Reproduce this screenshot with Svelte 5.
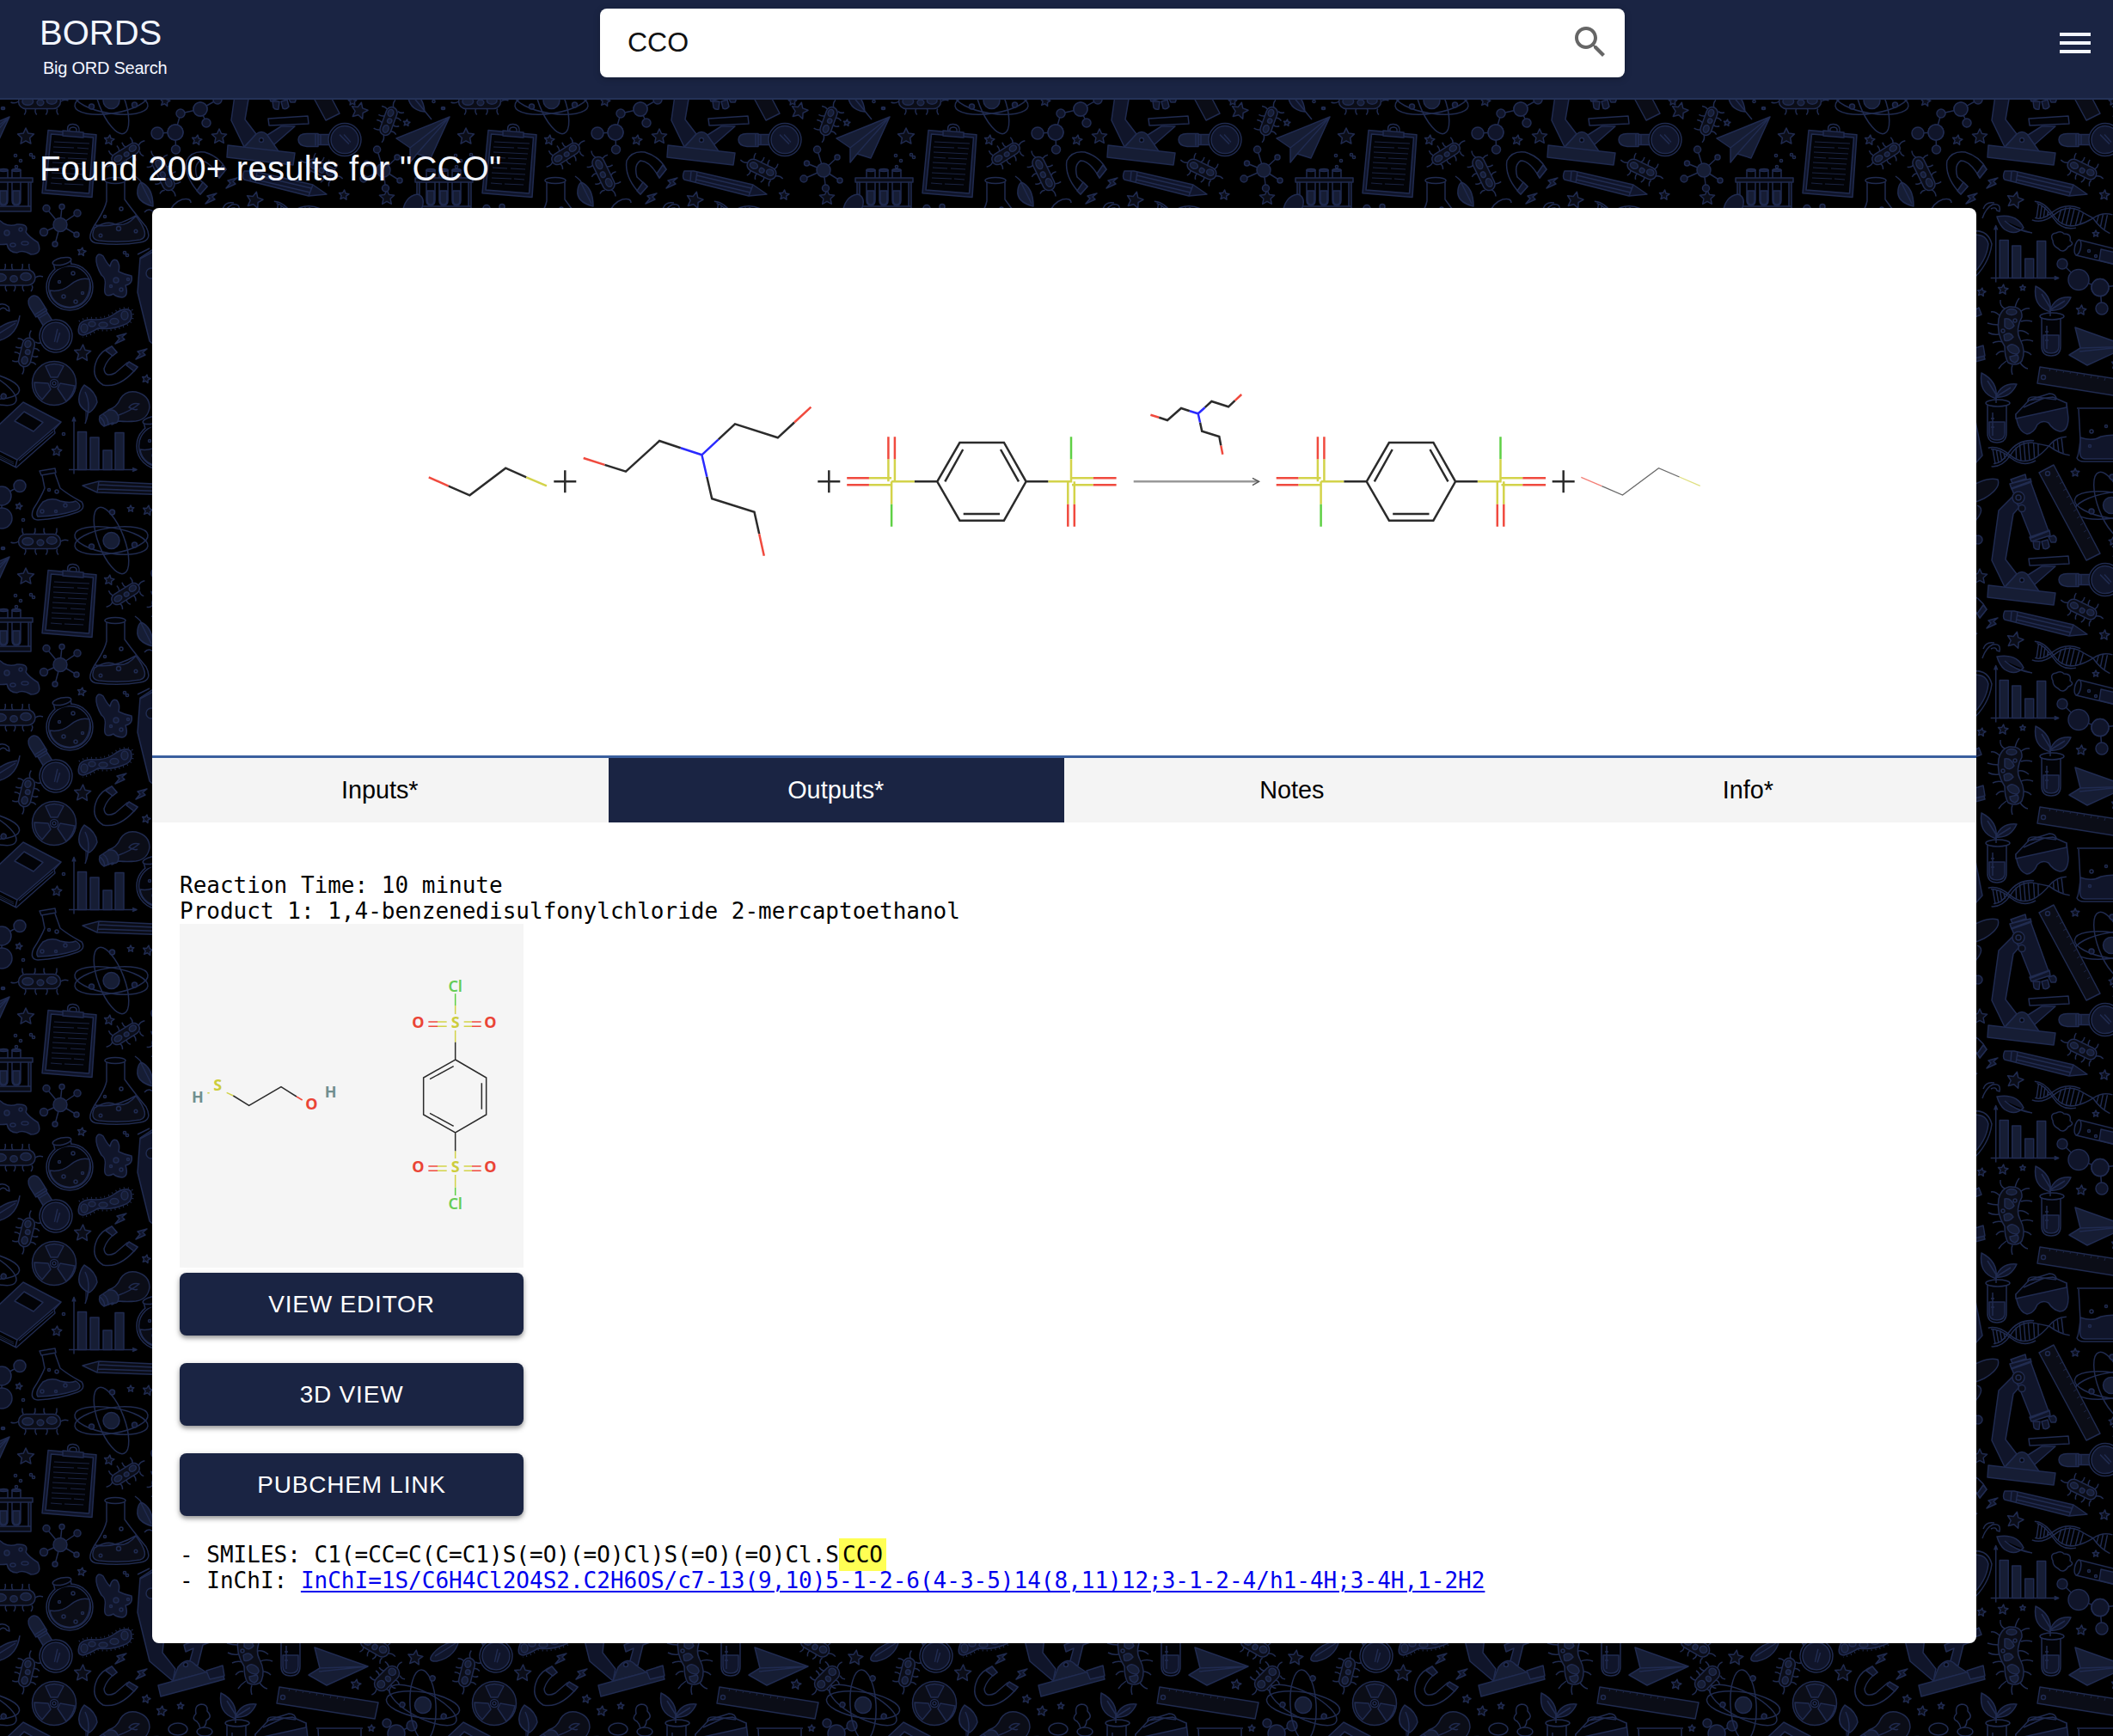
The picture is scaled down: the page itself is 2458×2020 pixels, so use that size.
<script>
  const T = 512;
  const starPts = (cx, cy, r, turn = 0) => {
    let s = '';
    for (let i = 0; i < 10; i++) {
      const a = ((i * 36 - 90 + turn) * Math.PI) / 180;
      const q = i % 2 ? r * 0.48 : r;
      s += `${(cx + Math.cos(a) * q).toFixed(1)},${(cy + Math.sin(a) * q).toFixed(1)} `;
    }
    return s;
  };

  // [x, y, radius, rotation]
  const stars = [
    [30, 159, 10, 0], [127, 163, 6, 8], [95, 293, 5, 10], [96, 411, 10, 3], [170, 441, 5, 12], [66, 13, 6, 5],
    [22, 77, 4, 12], [152, 80, 4, 0], [172, 82, 6, 10], [255, 159, 9, 0], [296, 233, 10, 14], [400, 227, 6, 6],
    [257, 340, 5, 10], [282, 337, 6, 6], [305, 335, 3.5, 0], [373, 361, 6, 5], [390, 272, 4, 0], [366, 38, 5, 0],
    [192, 118, 6, 10], [229, 163, 6, 10], [418, 129, 10, 14], [473, 143, 4, 8], [450, 230, 9, 0], [414, 424, 6, 10],
    [483, 393, 9, 8], [432, 475, 4, 5], [188, 455, 6, 8], [210, 449, 4, 4], [410, 118, 5, 0]
  ];

  // [x, y, length, thickness, rotation]
  const germs = [
    [46, 118, 49, 17, 0], [146, 179, 36, 13, -32], [190, 202, 42, 14, 64], [15, 323, 52, 18, 0], [31, 410, 34, 14, -76],
    [374, 197, 36, 14, 26], [452, 141, 34, 13, -70], [450, 417, 34, 17, -45], [436, 379, 36, 16, 30]
  ];
  const hairs = (l, w) => {
    let d = '';
    const n = Math.max(4, Math.round(l / 11));
    for (let i = 0; i < n; i++) {
      const x = -l / 2 + w / 3 + ((l - w / 1.5) * i) / (n - 1);
      const k = i % 2 ? 2 : -2;
      d += `M${x} ${-w / 2}q${k} -3 ${k / 2} -7M${x + 2} ${w / 2}q${-k} 3 ${k / 2} 7`;
    }
    return d + `M${-l / 2} 0q-4 3 -9 1M${l / 2} 0q4 -3 9 -1`;
  };

  // hub first, then the satellites around it
  const hubs = [
    [[70, 261.5, 8], [54, 242.5, 4], [72, 240.5, 3], [90, 248, 4], [51, 270, 4.5], [89, 273, 3], [64, 284, 3]],
    [[446, 198, 8], [438.6, 174, 4], [462, 183, 3], [426.5, 190, 3], [423, 208, 4], [465, 210, 3], [448.5, 219, 4]]
  ];
  const chains = [
    [[183, 155, 7], [204, 154, 9], [204.5, 174, 5]],
    [[204, 154, 9], [210, 132, 5], [233, 127, 8], [240, 143, 5]],
    [[233, 127, 8], [253, 116, 5]],
    [[351, 307, 6], [370, 325.5, 12], [395, 334.6, 10], [397, 359, 7]],
    [[395, 334.6, 10], [424, 331, 7]],
    [[23, 53.5, 7], [2, 65, 11], [2, 91, 12]],
    [[450, 469, 5], [461, 481, 10], [479, 472, 6]]
  ];

  const atoms = [[129.5, 117, 0], [492, 448, 18], [408, 76, 0]];
  const charts = [[86, 34.5 + 512], [273.7, 323.5]];
  const bars = [[4.5, 44], [19, 37.5], [34, 22.5], [48, 43]];
  const sprouts = [[0, 0], [-63, 101]];
  const lenses = [[65, 391, 58], [401, 162.6, 0]];
  const bolts = [[140, 394], [164, 412], [269, 213], [245, 231]];
  const dots = [[18, 181], [24, 187], [36, 180], [39, 183], [19, 194], [145, 294], [148, 297], [74, 505], [27, 93], [3, 126], [504.5, 118], [516, 126], [475, 374]];

  const cols = [-1, 0, 1, 2, 3, 4];
  const rows = [-1, 0, 1, 2, 3];

  const tabs = ['Inputs*', 'Outputs*', 'Notes', 'Info*'];
  let active = $state(1);
  let query = $state('CCO');
  const actions = ['VIEW EDITOR', '3D VIEW', 'PUBCHEM LINK'];
</script>

{#snippet dichloride()}
  <path class="y" d="M1010.9 556.3H1037M1010.9 564.3H1037M1033.4 534.3V560.3M1040.9 534.3V560.3M1037.1 560.3V586.7M1037.1 560.3H1063.9" />
  <path class="r" d="M985.2 556.3H1010.9M985.2 564.3H1010.9M1033.4 508.3V534.3M1040.9 508.3V534.3" />
  <path class="g" d="M1037.1 586.7V612.7M1246 508.3V534.3" />
  <path class="y" d="M1247 556.3H1271.8M1247 564.3H1271.8M1242.3 560.3V586.7M1249.8 560.3V586.7M1246 534.3V560.3H1219.3" />
  <path class="r" d="M1271.8 556.3H1298.6M1271.8 564.3H1298.6M1242.3 586.7V612.7M1249.8 586.7V612.7" />
  <path class="k" d="M1063.9 560.3H1090.2M1193.6 560.3H1219.3M1090.2 560.3L1116.4 515H1167.9L1193.6 560.3L1167.9 605.7H1116.4ZM1120.2 523L1099.3 560.3M1164 523L1185 560.3M1120.7 598H1163" />
{/snippet}

{#snippet plus(x)}
  <path class="k" d="M{x - 13} 560.3h26M{x} 547.3v26" />
{/snippet}

<div class="page">
  <svg class="backdrop" width="2458" height="2020" viewBox="0 0 2458 2020" aria-hidden="true">
    <defs>
      <g id="doodles">
        {#each stars as [x, y, r, t]}<polygon class="f1" points={starPts(x, y, r, t)} />{/each}
        {#each dots as [x, y]}<circle cx={x} cy={y} r="1.6" />{/each}
        {#each germs as [x, y, l, w, t]}
          <g transform="translate({x} {y}) rotate({t})">
            <path d={hairs(l, w)} />
            <rect class="f1" x={-l / 2} y={-w / 2} width={l} height={w} rx={w / 2} />
            <ellipse class="f3" cx={-l * 0.28} cy="0" rx={l * 0.13} ry={w * 0.25} />
            <ellipse class="f3" cx={l * 0.02} cy={w * 0.08} rx={l * 0.08} ry={w * 0.2} />
            <ellipse class="f3" cx={l * 0.29} cy="-1" rx={l * 0.12} ry={w * 0.25} />
          </g>
        {/each}

        <!-- large upright bacterium -->
        <path d="M284 359Q278 356 279 349M296 358Q298 350 301 347M302 363Q308 358 313 359M303 374Q309 372 316 374M300 385Q306 384 312 389M303 397Q310 394 317 397M306 409Q311 409 315 413M302 422Q306 428 311 429M293 425Q291 430 293 436M286 420Q280 424 277 429M283 409Q278 408 274 413M282 398Q276 396 270 399M277 389Q270 390 265 387M277 378Q270 378 264 376M279 368Q273 362 268 363" />
        <path class="f1" d="M289 357Q305 356 304 369Q296 384 302 395Q309 408 304 420Q298 427 288 422Q284 415 284 403Q274 388 277 371Q280 359 289 357Z" />
        <ellipse class="f3" cx="292" cy="363" rx="6" ry="3.500" /><path class="f3" d="M284 371Q291 369 295 379Q290 386 284 380ZM283 390Q290 385 294 392Q289 398 284 396ZM287 404Q292 397 300 405Q303 411 297 412Q288 411 287 404ZM290 415L299 413Q302 419 296 422Q290 421 290 415Z" />
        <circle cx="296" cy="373" r="2" /><circle cx="282" cy="385" r="2" />

        {#each hubs as hub}
          {#each hub.slice(1) as [x, y, r]}
            <path d="M{hub[0][0]} {hub[0][1]}L{x} {y}" />
            <circle class="f2" cx={x} cy={y} r={r} />
          {/each}
          <circle class="f3" cx={hub[0][0]} cy={hub[0][1]} r={hub[0][2]} />
        {/each}
        {#each chains as chain}
          <polyline points={chain.map((p) => `${p[0]},${p[1]}`).join(' ')} />
          {#each chain as [x, y, r]}<circle class="f2" cx={x} cy={y} r={r} />{/each}
        {/each}
        {#each atoms as [x, y, t]}
          <g transform="translate({x} {y}) rotate({t})">
            <ellipse rx="43" ry="15" transform="rotate(9)" />
            <ellipse rx="43" ry="15" transform="rotate(-9)" />
            <ellipse rx="41" ry="15" transform="rotate(69)" />
            <circle class="f3" r="9.5" />
            <circle class="f2" cx="1" cy="-33" r="3" />
            <circle class="f2" cx="-23" cy="7" r="3" />
            <circle class="f2" cx="27" cy="5" r="3" />
          </g>
        {/each}
        {#each charts as [x, y]}
          <g transform="translate({x} {y})">
            <path d="M0 5V-60M-6 0H72M-2 -56L0 -61L2 -56M68 -2L73 0L68 2" />
            {#each bars as [bx, h]}<rect class="f3" x={bx} y={-h} width="10" height={h} />{/each}
          </g>
        {/each}
        {#each sprouts as [x, y]}
          <g transform="translate({x} {y})">
            <path class="f2" d="M337 363C322 358 318 348 320 333C332 339 339 348 337 363ZM337 361C341 349 350 345 361 346C356 357 348 362 337 361Z" />
            <path d="M337 368V358L327 342M338 360L354 350" />
            <path class="f0" d="M327 370V403Q327 414 338 414Q349 414 349 403V370" />
            <path class="f2" d="M329 390H347V403Q347 411 338 411Q329 411 329 403Z" />
            <ellipse cx="339" cy="368" rx="14" ry="4" />
            <path d="M333 379V406M331 386h4M331 396h4" />
          </g>
        {/each}
        {#each lenses as [x, y, t]}
          <g transform="translate({x} {y}) rotate({t})">
            <path class="f3" d="M-17 -6H-31V6H-17ZM-31 -7H-44Q-54 -7 -54 0Q-54 7 -44 8H-31Z" />
            <path d="M-28 -6v12M-34 -7v14" />
            <circle class="f0" r="19" />
            <circle class="f2" r="16" />
            <path d="M-6 -6L5 5M-1 -6L7 3" />
          </g>
        {/each}
        {#each bolts as [x, y]}<path class="f2" d="M{x + 7} {y - 6}L{x - 4} {y - 3}L{x - 1} {y}L{x - 6} {y + 6}L{x + 5} {y + 1}L{x + 2} {y - 2}Z" />{/each}

        <!-- clipboard -->
        <path class="f2" d="M56 151.5L112 156.7L107 229.4L49 224.7Z" />
        <path class="f0" d="M59.5 156L108.5 160L103.5 225L53 221Z" />
        <path d="M79 153Q77 144 85 144.500Q93 145 92 153M81 153Q80 148 85 148Q90 148 89 153" />
        <path class="f2" d="M73 152L97 154V160L73 158Z" />
        <path class="thin" d="M63 165l41 2M62 171l24 1m4 0l13 1M62 177l40 2M62 183l14 1m3 0l22 1M61 189l39 2M61 195l17 1m4 0l17 1M60 201l39 2M60 207l23 1m3 0l12 1M59 213l13 1m3 0l22 1" />

        <!-- conical flask -->
        <ellipse class="f0" cx="134" cy="210" rx="12" ry="3.500" />
        <path d="M124 212V234Q122 244 110 262Q98 282 114 283Q140 286 163 282Q178 280 170 264Q155 246 145 232V212" />
        <path class="f1" d="M110 265Q125 256 134 261Q148 264 158 251Q176 275 163 279Q140 283 115 280Q104 278 110 265Z" />
        <path d="M111 262Q132 266 158 251" /><circle cx="138" cy="266" r="2.500" /><circle cx="117" cy="274" r="1.800" /><circle cx="158" cy="269" r="1.800" /><circle cx="141" cy="243" r="2" /><circle cx="122" cy="252" r="1.500" />
        <path class="f3" d="M157 205Q164 210 164 212Q178 218 178 240Q158 235 160 221Q161 214 164 212M164 213L176 237" />

        <!-- tube rack -->
        {#each [501, 516, 531] as x}
          <path class="f0" d="M{x - 5} 198V233Q{x - 5} 239 {x} 239Q{x + 5} 239 {x + 5} 233V198Z" />
          <path class="f3" d="M{x - 4} 222H{x + 4}V233Q{x + 4} 238 {x} 238Q{x - 4} 238 {x - 4} 233Z" />
          <ellipse cx={x} cy="198" rx="5" ry="1.500" />
        {/each}
        <path class="f1" d="M483 207H550V212H483ZM485 240H548V246H485ZM485 212H488V240H485ZM545 212H548V240H545Z" />

        <!-- amoebas -->
        <path class="f2" d="M-14 262Q-6 250 4 260Q12 264 20 261Q34 260 30 270Q34 276 44 282Q50 296 36 296Q26 290 20 294Q10 294 8 284Q-4 286 -10 280Q-18 272 -14 262Z" />
        <circle class="f3" cx="8" cy="271" r="3" /><ellipse cx="15" cy="285" rx="3" ry="2" /><ellipse cx="29" cy="283" rx="4" ry="2" /><circle cx="24" cy="267" r="2" />
        <path class="f2" d="M112 300Q114 293 120 298Q124 306 128 310Q130 300 136 303Q140 308 138 316Q146 320 153 321Q155 330 146 332Q150 345 142 346Q134 345 132 342Q120 348 122 334Q124 324 118 320Q111 308 112 300Z" />
        <circle class="f3" cx="135" cy="326" r="3" /><circle cx="141" cy="337" r="2" /><circle cx="129" cy="333" r="1.500" /><circle cx="149" cy="325" r="1.500" />

        <!-- round flasks -->
        {#each [[81, 334], [186, 519]] as [x, y]}
          <g transform="translate({x} {y})">
            <circle r="27" /><circle class="f0" r="24.500" />
            <path class="f1" d="M-23 4Q-10 6 0 -2Q12 -12 23 -9Q26 8 14 19Q0 28 -14 19Q-22 13 -23 4Z" />
            <path class="f0" d="M-17 -20L-19 -28L1 -33L2 -26" /><ellipse class="f0" cx="-9" cy="-30" rx="11" ry="4" transform="rotate(-12 -9 -30)" />
            <circle cx="-7" cy="11" r="2" /><circle cx="7" cy="17" r="2" /><circle cx="15" cy="7" r="1.500" /><circle cx="4" cy="-16" r="2" /><circle cx="-12" cy="-6" r="1.500" />
          </g>
        {/each}

        <!-- long bacterium -->
        <path class="f2" d="M93 377Q98 371 110 372Q124 372 132 366Q146 356 152 362Q156 374 144 378Q130 384 114 382Q104 388 97 390Q88 390 93 377Z" />
        <ellipse class="f3" cx="98" cy="382" rx="4" ry="5" /><ellipse class="f3" cx="107" cy="377" rx="4" ry="3" /><ellipse class="f3" cx="120" cy="378" rx="5" ry="3" /><ellipse class="f3" cx="133" cy="374" rx="5" ry="3.500" /><ellipse class="f3" cx="145" cy="367" rx="4" ry="5" />
        <path class="hair" d="M92 374Q98 369 110 370Q124 370 131 364Q146 354 154 361Q158 375 144 380Q130 386 114 384Q104 391 96 392" />

        <!-- microscope, left -->
        <path class="f2" d="M163 300L178 290L194 340L189 387L204 406L201 420L174 397L160 340Z" />
        <path class="f2" d="M160 296L174 289M163 301L178 293" /><circle class="f1" cx="176" cy="318" r="6" />
        <path class="f2" d="M214 378L244 366L247 374L236 378L230 402L220 400L225 382L216 386Z" />
        <path class="f3" d="M201 420L207 404Q218 390 228 402L240 410Z" />
        <path class="f3" d="M184 425L257 405L261 418L187 438Z" /><circle class="f0" cx="216" cy="401" r="2.500" />

        <!-- magnets -->
        <path d="M130 403L136 410Q124 418 121 429Q122 440 134 434L148 422L160 427Q140 452 120 448Q104 438 113 418Q118 408 130 403ZM123 408L131 414M150 421L157 431" />
        <path class="f2" d="M130 403L136 410L131 414L123 408ZM150 421L160 427L156 432L147 425Z" />
        <path d="M263 197L255 207Q244 187 233 187Q225 192 229 206L241 217L233 226Q214 206 217 187Q223 175 238 177Q255 182 263 197Z" />
        <path class="f2" d="M263 197L255 207L252 202L259 192ZM241 217L233 226L229 222L236 212Z" />

        <!-- leaves -->
        <path class="f2" d="M23 367Q20 392 -4 397Q-16 398 -8 388Q2 376 20 373M18 376Q6 384 -6 391" />
        <path class="f2" d="M98 448Q112 456 113 468Q110 476 104 480Q90 474 92 462Q93 454 98 448ZM99 456Q107 472 99 493" />
        <path class="f2" d="M275 252Q298 248 306 265Q296 275 284 267Q278 262 275 252ZM284 257Q296 268 316 271" />
        <path class="f2" d="M474 106Q492 108 494 130Q474 128 474 106ZM480 112L502 139" />
        <path d="M-6 358Q2 350 10 357L11 362L8 361Q4 355 -2 362M258 254Q262 242 270 238Q280 236 278 246L275 245Q274 240 268 243M196 250Q200 236 212 232Q222 230 222 236" />

        <!-- radiation sign -->
        <circle class="f1" cx="63" cy="446" r="25.500" />
        <path class="f2" d="M59 439L53 426Q63 421 74 426L67 439ZM70 446L87 449Q85 460 77 467L67 452ZM56 446L40 445Q40 457 49 465L59 453Z" />
        <circle class="f0" cx="63" cy="446" r="4.500" /><circle cx="63" cy="446" r="2" />

        <!-- bulb -->
        <path class="f1" d="M126 477Q136 474 140 464Q146 454 158 456Q174 460 174 474Q172 488 158 490Q148 491 138 490L130 494Z" />
        <path d="M138 483Q152 478 162 470Q154 468 150 474Q158 478 160 476" />
        <path class="f3" d="M125 478Q134 474 138 485Q138 494 131 492L121 496Q114 492 116 484Z" /><path d="M120 482Q126 486 126 495M116 485Q121 488 122 496" />

        <!-- book -->
        <path class="f2" d="M27 468L71 491L20 535L-22 514Z" /><path class="f0" d="M28 479L50 491.500L39 502L17 490Z" />
        <path d="M71 491L63 500L64 504L19 544L-20 524V514M20 535L18 543M62 502L22 536" /><path class="thin" d="M16 540L-14 525M16 538L-10 525" />

        <!-- tilted flask -->
        <g transform="translate(0 512)">
          <path class="f0" d="M46 36L64 33L65 38L48 41Z" /><path d="M49 41L52 56Q48 66 39 80Q34 92 44 93Q68 92 90 84Q100 80 95 72Q80 64 70 56L64 39" />
          <path class="f2" d="M50 72Q60 66 70 71Q82 74 88 71Q98 78 88 82Q66 89 44 89Q40 84 50 72Z" /><circle cx="49" cy="83" r="2" /><circle cx="76" cy="76" r="2" /><circle cx="65" cy="83" r="1.500" /><circle cx="66" cy="60" r="2" /><circle cx="57" cy="58" r="1.500" />
        </g>

        <!-- pencils -->
        <path class="f1" d="M96 53L115 48L200 52V64L113 61Z" /><path d="M115 48L113 61M114 52L200 56M114 57L200 60" />
        <path class="f2" d="M284 199Q281 206 284 209L359 228L380 226L364 215L295 199Z" /><path d="M292 199L291 211M299 200L297 213M364 215L359 228M298 204L362 219M298 209L361 224" />

        <!-- paper planes -->
        <path class="f3" d="M523 136L461 161L477 172V189L485 179L501 184ZM523 136L477 172M523 136L485 179" />
        <path class="f3" d="M366 381L428 403L380 425L359 413L372 405ZM428 403L372 405M428 403L371 409" />

        <!-- microscope, right -->
        <path class="f2" d="M277 82L293 66L301 78L294 86L285 139L298 156L284 171L269 140Z" />
        <path class="f2" d="M292 56L314 48L335 106L315 114ZM291 46L308 40L309 45L293 50ZM290 51L314 45L315 49L292 57ZM313 113L336 105L337 111L315 118Z" />
        <circle class="f1" cx="300" cy="67" r="7" /><circle cx="300" cy="67" r="3" /><circle class="f1" cx="304" cy="79.600" r="4" />
        <path class="f2" d="M317 118h8l-1 9q-4 1 -6 -2ZM327 118l7 -2l2 8q-3 4 -7 2ZM335 113l6 -2q5 3 2 8l-5 0Z" />
        <path class="f2" d="M327 147H343L319 168L308 159Z" /><path class="f0" d="M312 138L358 135L359 144L313 146Z" />
        <path class="f3" d="M283 172.500L298 156Q304 151 310 156L324 176Z" /><path class="f3" d="M265 169L343 178L341 192L264 183Z" /><circle class="f0" cx="304" cy="163" r="2.500" />

        <!-- rulers -->
        <path class="f1" d="M325 427L440 445L436 464L322 446Z" /><circle cx="329" cy="439" r="2.500" />
        <path class="thin" d="M337 429l-1 3m9 -2l-1 3m9 -2l-1 3m9 -2l-1 3m9 -1l-1 3m9 -2l-1 3m9 -1l-1 3m9 -2l-1 3m9 -1l-1 3" />
        <path class="f1" d="M324 38L341 29L395 132L379 140Z" /><circle cx="334" cy="39" r="2.500" />
        <path class="thin" d="M347 41l-3 2m7 6l-3 2m7 6l-3 2m7 6l-3 2m7 6l-3 2m7 6l-3 2m7 6l-3 2m7 6l-3 2m7 6l-3 2m7 6l-3 2" />

        <!-- DNA strands -->
        {#each [[317, 247, 8], [267, 534, -10]] as [x, y, t]}
          <g transform="translate({x} {y}) rotate({t})">
            <path d="M0 -13Q12 -14 24 0Q36 14 52 8Q62 4 70 -3Q80 -12 92 -10M0 9Q12 12 24 0Q36 -14 52 -10Q62 -6 70 -3Q80 8 92 12" />
            <path d="M3 -11Q12 -10 24 3Q36 17 52 11M3 6Q12 8 22 -3Q36 -17 54 -12M5 -10V7M9 -9V6M13 -8V5M17 -4V3M32 -8L30 6M37 -11L35 9M42 -12L40 10M47 -11L45 10M53 -9L51 8M58 -7L56 6M76 -7L75 2M81 -9L80 6M86 -9L85 8" />
          </g>
        {/each}

        <!-- cloud puffs -->
        <path d="M340 280Q336 272 344 271Q350 268 353 272Q362 272 360 280Q366 284 358 287Q352 296 346 289Q340 286 340 280ZM228 458Q226 448 234 447Q242 447 241 455Q248 462 240 466Q240 474 233 475Q232 470 229 467Q222 464 228 458Z" />

        <!-- tilted tube -->
        <path class="f0" d="M370 279L418 291V309L367 297Z" /><ellipse class="f0" cx="369" cy="288" rx="3.500" ry="9" transform="rotate(12 369 288)" /><path class="f2" d="M396 290L418 295V309L394 303Z" /><circle cx="382" cy="292" r="1.500" /><circle cx="390" cy="298" r="1.500" />

        <!-- goggles -->
        <path class="f2" d="M297 482L356 469L358 486Q358 502 348 502Q340 500 335 492Q328 488 322 494Q318 504 310 505Q299 502 297 482Z" /><path class="f0" d="M297 482L312 466L340 462L356 469L356 474L297 487Z" /><path d="M311 468Q310 461 320 462L344 465M314 465L336 458Q344 458 344 465M306 474L330 463" />

        <!-- beaker -->
        <path d="M368 475H422M370 476L372 512Q370 530 368 533Q370 537 376 537H414Q421 536 420 528V476" /><path class="f2" d="M372 509Q386 514 396 508Q408 505 418 507V528Q418 534 412 534H378Q370 534 372 522Z" /><circle cx="385" cy="502" r="2" /><circle cx="402" cy="496" r="1.500" /><circle cx="383" cy="519" r="1.500" />

        <!-- assorted edges -->
        <path class="f1" d="M238 58Q262 42 276 46Q280 56 260 68Q248 74 238 74ZM252 76Q262 80 250 94" />
        <path class="f2" d="M240 274Q262 270 265 284Q263 304 244 322Z" /><path d="M240 270Q264 264 269 284Q266 308 244 328" />
        <path class="f2" d="M240 408L259 402L261 414L244 418ZM240 366L254 358L257 366L244 371ZM240 494L250 490L258 530L244 546Z" />
        <path class="f2" d="M468 250Q470 228 486 226Q496 230 490 244L484 254Z" /><ellipse class="f0" cx="207" cy="476" rx="11" ry="7" /><ellipse class="f0" cx="238" cy="479" rx="9" ry="5" />
        <path d="M259 243Q262 234 272 236M168 247Q174 240 182 250" />
      </g>
    </defs>
    {#each rows as r}
      {#each cols as c}<use href="#doodles" x={c * T} y={r * T} />{/each}
    {/each}
  </svg>

  <header>
    <div class="brand">
      <span class="name">BORDS</span>
      <span class="tag">Big ORD Search</span>
    </div>
    <div class="search">
      <input bind:value={query} aria-label="Search" />
      <svg width="48" height="48" viewBox="0 0 24 24"><path fill="#666" d="M15.5 14h-.79l-.28-.27C15.410 12.590 16 11.110 16 9.500 16 5.910 13.090 3 9.500 3S3 5.910 3 9.500 5.910 16 9.500 16c1.610 0 3.090-.59 4.230-1.570l.27.28v.79l5 4.990L20.490 19l-4.990-5zm-6 0C7.010 14 5 11.990 5 9.500S7.010 5 9.500 5 14 7.010 14 9.500 11.990 14 9.500 14z" /></svg>
    </div>
    <button class="menu" aria-label="Menu">
      <svg width="48" height="48" viewBox="0 0 24 24"><path fill="#f3f6ff" d="M3 18h18v-2H3v2zm0-5h18v-2H3v2zm0-7v2h18V6H3z" /></svg>
    </button>
  </header>

  <h1>Found 200+ results for "CCO"</h1>

  <main>
    <svg class="reaction" width="2122" height="637" viewBox="177 242 2122 637">
      <path class="r" d="M498.800 555.300L521.800 565.700" /><path class="k" d="M521.800 565.700L546.400 576.300L588.200 544.700L612.300 555.300" /><path class="y" d="M612.300 555.300L635.900 565.300" />
      {@render plus(657.3)}
      <path class="k" d="M791.800 521.200L767.100 513L728 548.700L703.400 540.900M835.700 511.300L855 493.300L904.800 509.300L924.100 491.500M822.300 554.800L828.200 580.300L877.500 595.700L883.200 621.200" />
      <path class="b" d="M791.800 521.200L816.400 529.300L835.700 511.300M816.400 529.300L822.300 554.800" />
      <path class="r" d="M703.400 540.900L678.700 533M924.100 491.500L943.400 473.700M883.200 621.200L888.800 646.700" />
      {@render plus(964.3)}
      {@render dichloride()}

      <path class="k" d="M1383.900 478.200L1374 475L1358 489L1348.200 485.800M1401.600 474.200L1409.400 467L1429 473.300L1436.600 466.200M1396 491.500L1398.200 501.700L1418.300 508L1420.300 518.400" />
      <path class="b" d="M1383.900 478.200L1393.700 481.300L1401.600 474.200M1393.700 481.300L1396 491.500" />
      <path class="r" d="M1348.200 485.800L1338.400 482.700M1436.600 466.200L1444.200 459M1420.300 518.400L1422.300 528.700" />
      <path class="arrow" d="M1318.700 560.300H1464" /><path class="head" d="M1457 556.300L1464.500 560.300L1457 564.600" />

      <g transform="translate(499.500 0)">{@render dichloride()}</g>
      {@render plus(1818.7)}
      <g class="faint">
        <path class="r" d="M1839.300 555.300L1863.400 565.700" /><path class="k" d="M1863.400 565.700L1887.500 576L1929.500 544.700L1953.600 555" /><path class="y" d="M1953.600 555L1977.700 565.300" />
      </g>
    </svg>

    <nav>
      {#each tabs as tab, i}
        <button class="tab" class:active={active === i} onclick={() => (active = i)}>{tab}</button>
      {/each}
    </nav>

    <section>
      <div class="row">Reaction Time: 10 minute</div>
      <div class="row">Product 1: 1,4-benzenedisulfonylchloride 2-mercaptoethanol</div>
      <svg class="product" width="400" height="400" viewBox="27 15 1200 1200">
        <path class="y" d="M124 605h7M191 604L214 615" />
        <path class="k" d="M214 615L269 649L381 584L435 618" /><path class="r" d="M435 618L455 630" />
        {#each [0, 504] as dy}
          <g transform="translate(0 {dy})">
            <path class="y" d="M927 357h32M927 373h32M1019 357h28M1019 373h28" />
            <path class="r" d="M895 357h32M895 373h32M1047 357h32M1047 373h32" />
            <text class="tr" x="859" y="379">O</text><text class="tr" x="1111" y="379">O</text><text class="ty" x="989" y="379">S</text>
          </g>
        {/each}
        <path class="g" d="M989 259V300M989 935V963" /><path class="y" d="M989 300V330M989 387V428M989 808V834M989 891V935" />
        <path class="k" d="M989 428V489M989 744V808M989 489L1097 552V681L989 744L878 681V552ZM983 512L900 557M1081 571V662M983 721L900 676" />
        <text class="tg" x="989" y="251">Cl</text><text class="tg" x="989" y="1010">Cl</text>
        <text class="ty" x="160" y="598">S</text><text class="th" x="90" y="638">H</text><text class="tr" x="487" y="662">O</text><text class="th" x="554" y="622">H</text>
      </svg>
      <div class="actions">
        {#each actions as a}<button class="action">{a}</button>{/each}
      </div>
      <div class="row">- SMILES: C1(=CC=C(C=C1)S(=O)(=O)Cl)S(=O)(=O)Cl.S<mark>CCO</mark></div>
      <div class="row">- InChI: <a href="#inchi">InChI=1S/C6H4Cl2O4S2.C2H6OS/c7-13(9,10)5-1-2-6(4-3-5)14(8,11)12;3-1-2-4/h1-4H;3-4H,1-2H2</a></div>
    </section>
  </main>
</div>

<style>
  :global(body) { margin: 0; background: #000; }
  .page { position: relative; width: 2458px; height: 2020px; overflow: hidden; background: #000; font-family: "Liberation Sans", Arial, sans-serif; }
  .backdrop { position: absolute; inset: 0; fill: none; stroke: #202b50; stroke-width: 1.5; stroke-linejoin: round; }
  .backdrop .f0 { fill: #020307; }
  .backdrop .f1 { fill: #0b0d17; }
  .backdrop .f2 { fill: #10152a; }
  .backdrop .f3 { fill: #161d34; }
  .backdrop .thin { stroke-width: 1; stroke: #1b2443; }
  .backdrop .hair { stroke-width: 2; stroke-dasharray: 1 4; }

  header { position: relative; box-sizing: border-box; display: flex; height: 116px; background: #1a2443; border-bottom: 2px solid #243156; }
  .brand { width: 698px; box-sizing: border-box; padding: 15px 0 0 46px; display: flex; flex-direction: column; gap: 7px; color: #f3f6ff; }
  .name { font-size: 40px; line-height: 46px; }
  .tag { font-size: 20px; line-height: 23px; padding-left: 4px; letter-spacing: -0.25px; }
  .search { display: flex; align-items: center; width: 1192px; height: 80px; margin-top: 10px; box-sizing: border-box; padding: 0 16px 2px 32px; background: #fff; border-radius: 8px; box-shadow: 0 2px 8px rgba(0, 0, 0, 0.2); }
  .search input { flex: 1; border: 0; outline: 0; padding: 0; background: none; font: 32px/38px "Liberation Sans", Arial, sans-serif; color: #111; }
  .menu { margin: 26px 20px 0 auto; padding: 0; width: 48px; height: 48px; border: 0; background: none; }

  h1 { position: relative; margin: 57px 0 23px 46px; font-size: 40px; line-height: 46px; font-weight: 400; letter-spacing: 0.28px; color: #f3f6ff; }

  main { position: relative; width: 2122px; height: 1670px; margin-left: 177px; background: #fff; border-radius: 8px; overflow: hidden; }
  svg { display: block; }
  .reaction, .product { fill: none; stroke-width: 2.5; }
  .product { background: #f5f5f5; stroke-width: 4.500; }
  .k { stroke: #2b2b2b; }
  .r { stroke: #f04a3e; }
  .y { stroke: #d3d34a; }
  .g { stroke: #5fd045; }
  .b { stroke: #2a2aff; }
  .faint { stroke-width: 1.3; opacity: 0.7; }
  .arrow { stroke: #999; }
  .head { stroke: #555; stroke-width: 1.5; }
  .product text { font: 700 54px "Noto Sans", sans-serif; text-anchor: middle; stroke: none; }
  .tr { fill: #ea4436; }
  .ty { fill: #cdcd3c; }
  .product .tg { fill: #66cc55; font-weight: 600; }
  .th { fill: #708f90; }

  nav { display: flex; height: 75px; border-top: 3px solid #3a5f9e; }
  .tab { flex: 1; padding: 0 1px 0 0; border: 0; background: #f4f4f4; color: #000; font: 28.800px "Liberation Sans", Arial, sans-serif; }
  .tab.active { background: #1a2443; color: #fff; }

  section { padding: 58px 32px; font: 26px/30px "DejaVu Sans Mono", monospace; color: #000; }
  .row { height: 30px; white-space: pre; }
  .actions { display: flex; flex-direction: column; gap: 32px; width: 400px; margin: 6px 0 30px; }
  .action { height: 73px; padding: 0; border: 0; border-radius: 8px; background: #1a2443; color: #fff; font: 28px "Liberation Sans", Arial, sans-serif; letter-spacing: 0.8px; box-shadow: 0 3px 5px rgba(0, 0, 0, 0.35), 0 2px 10px rgba(0, 0, 0, 0.12); }
  mark { padding: 4px; background: #ffff54; color: #000; }
  a { color: #0000ee; text-decoration: underline; text-decoration-thickness: 2px; text-underline-offset: 3px; }
</style>
